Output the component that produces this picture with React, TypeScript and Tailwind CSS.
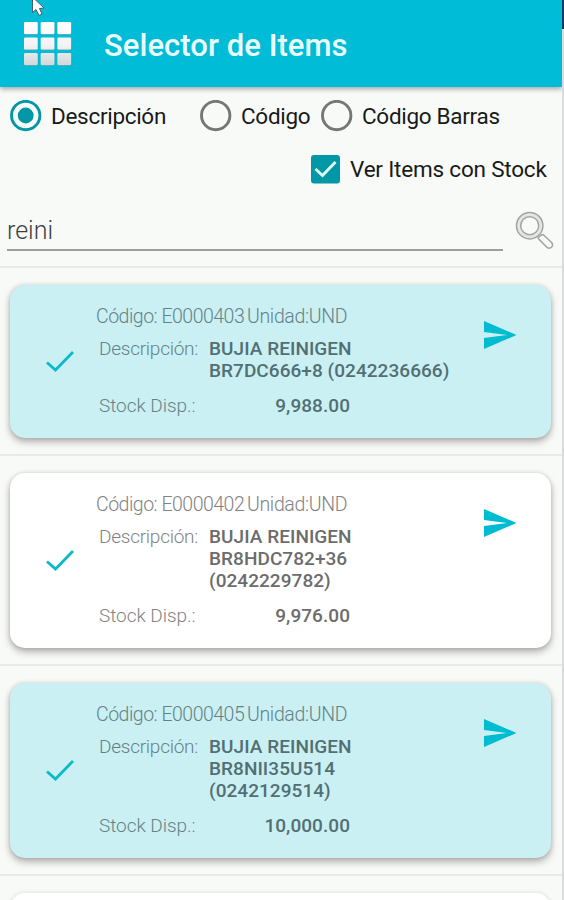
import { useState } from 'react';
import clsx from 'clsx';

type Item = {
    code: string;
    unit: string;
    description: string[];
    stock: string;
    selected: boolean;
};

const items: Item[] = [
    { code: 'E0000403', unit: 'UND', description: ['BUJIA REINIGEN', 'BR7DC666+8 (0242236666)'], stock: '9,988.00', selected: true },
    { code: 'E0000402', unit: 'UND', description: ['BUJIA REINIGEN', 'BR8HDC782+36', '(0242229782)'], stock: '9,976.00', selected: false },
    { code: 'E0000405', unit: 'UND', description: ['BUJIA REINIGEN', 'BR8NII35U514', '(0242129514)'], stock: '10,000.00', selected: true },
];

function GridIcon() {
    return (
        <svg width="48" height="46" viewBox="0 0 48 46">
            <defs>
                <linearGradient id="tiles" gradientUnits="userSpaceOnUse" x1="0" y1="0" x2="0" y2="44">
                    <stop offset="0" stopColor="#ffffff" />
                    <stop offset="0.5" stopColor="#f4f4f4" />
                    <stop offset="1" stopColor="#d2d6d7" />
                </linearGradient>
            </defs>
            {[0, 16.7, 33.4].map((x) =>
                [0, 15.5, 31].map((y) => (
                    <g key={`${x}-${y}`}>
                        <rect x={x} y={y + 0.6} width="13.7" height="12.2" rx="1.2" fill="#6fa9b1" />
                        <rect x={x} y={y} width="13.7" height="12" rx="1.2" fill="url(#tiles)" />
                    </g>
                ))
            )}
        </svg>
    );
}

function SearchIcon() {
    return (
        <svg width="40" height="40" viewBox="0 0 40 40" fill="none" stroke="#a3a5a4" strokeWidth="1.5" strokeLinejoin="round">
            <path d="M23 27 L25.5 24.5 L28 23.5 L36.4 31.3 Q38.6 34 36.7 36 Q34.6 38.2 31.9 36.3 L24.3 28.6 Z" fill="#f8faf8" />
            <circle cx="14.7" cy="14.7" r="13.2" fill="#e4e6e5" />
            <circle cx="14.7" cy="14.7" r="9" fill="#f8faf8" />
        </svg>
    );
}

function Radio({ label, checked, onSelect, className }: { label: string; checked: boolean; onSelect: () => void; className?: string }) {
    return (
        <button type="button" role="radio" aria-checked={checked} onClick={onSelect} className={clsx('flex items-center whitespace-nowrap', className)}>
            <svg width="32" height="32" viewBox="0 0 32 32" fill="none">
                <circle cx="15.7" cy="15.5" r="14.2" stroke={checked ? '#0097a7' : '#757776'} strokeWidth="2.9" />
                {checked && <circle cx="15.7" cy="15.5" r="7.9" fill="#0097a7" />}
            </svg>
            <span className="ml-[9px] text-[22.5px] leading-8 tracking-[-0.3px] text-[#181a19]">{label}</span>
        </button>
    );
}

function ItemCard({ item }: { item: Item }) {
    return (
        <li className="border-t-2 border-[#e8eae8] pt-[17px] pr-[11px] pb-4 pl-[10px]">
            <article
                className={clsx(
                    'flex rounded-[15px] pt-[21px] pb-[21px] shadow-[0_4px_7px_rgba(60,50,50,0.36),0_0_4px_rgba(60,50,50,0.16)]',
                    item.selected ? 'bg-[#caf0f4] text-[#526f73]' : 'bg-white text-[#6c6c6c]'
                )}
            >
                <div className="flex w-[86px] shrink-0 items-center pb-[2px] pl-[35px]">
                    <svg width="30" height="24" viewBox="0 0 30 24" fill="none" stroke="#0bb9cb" strokeWidth="2.8">
                        <path d="M2 13.5 L10.5 21 L28 3" />
                    </svg>
                </div>
                <div className="w-[380px] shrink-0">
                    <div className="flex text-[19.5px] leading-[22px] font-light opacity-85">
                        <span className="w-[151px] tracking-[-0.5px] whitespace-nowrap">Código: {item.code}</span>
                        <span className="tracking-[-0.35px] whitespace-nowrap">Unidad:{item.unit}</span>
                    </div>
                    <div className="mt-[10px] flex pl-[3px] text-[19px] leading-[22px]">
                        <span className="w-[110px] shrink-0 font-light tracking-[-0.25px] opacity-85">Descripción:</span>
                        <div className="font-medium tracking-[0.05px] whitespace-nowrap">
                            {item.description.map((line) => (
                                <p key={line}>{line}</p>
                            ))}
                        </div>
                    </div>
                    <div className="mt-[13px] flex w-[254px] justify-between pl-[3px] text-[19px] leading-[22px]">
                        <span className="font-light tracking-[-0.05px] opacity-85">Stock Disp.:</span>
                        <span className="font-medium tracking-[0.05px]">{item.stock}</span>
                    </div>
                </div>
                <div className="pt-[15px] pl-[8px]">
                    <svg width="33" height="28" viewBox="0 0 33 28" fill="#00bcd0">
                        <path d="M0 0 L32.5 14 L0 28 V17 L23 14 L0 11 Z" />
                    </svg>
                </div>
            </article>
        </li>
    );
}

export default function App() {
    const [mode, setMode] = useState('Descripción');
    const [onlyStock, setOnlyStock] = useState(true);
    const [query, setQuery] = useState('reini');

    return (
        <div className="relative flex h-[900px] w-[564px] overflow-hidden bg-[#f8faf8] font-['Roboto',sans-serif]">
            <main className="w-[562px] shrink-0">
                <header className="flex h-[87px] items-center bg-[#00bcd7] pl-6 shadow-[0_2px_5px_rgba(0,0,0,0.35)]">
                    <div className="pt-[3px]">
                        <GridIcon />
                    </div>
                    <h1 className="ml-[32px] pt-[4px] text-[31px] leading-9 font-medium tracking-[0.05px] whitespace-nowrap text-[#ecfdff]">Selector de Items</h1>
                </header>

                <div className="flex h-[58px] pt-[13px] pl-[10px]" role="radiogroup">
                    <Radio label="Descripción" checked={mode === 'Descripción'} onSelect={() => setMode('Descripción')} className="h-8 w-[190px]" />
                    <Radio label="Código" checked={mode === 'Código'} onSelect={() => setMode('Código')} className="h-8 w-[121px]" />
                    <Radio label="Código Barras" checked={mode === 'Código Barras'} onSelect={() => setMode('Código Barras')} className="h-8" />
                </div>

                <button type="button" onClick={() => setOnlyStock(!onlyStock)} className="flex h-12 items-center pl-[311px]">
                    <svg width="29" height="29" viewBox="0 0 29 29" fill="none">
                        <rect width="29" height="28.5" rx="3" fill={onlyStock ? '#0097a7' : '#757776'} />
                        {onlyStock && <path d="M4.5 14 L11.5 20.5 L24.5 7" stroke="#e6fbfd" strokeWidth="2.8" />}
                    </svg>
                    <span className="ml-[10px] pt-[2px] text-[22.5px] tracking-[-0.2px] whitespace-nowrap text-[#181a19]">Ver Items con Stock</span>
                </button>

                <div className="flex h-[73px] pt-[18px] pl-[7px]">
                    <input
                        value={query}
                        onChange={(e) => setQuery(e.target.value)}
                        className="h-[40px] w-[496px] border-b-2 border-[#9c9f9d] text-[25px] leading-9 font-light text-[#3c3e3d] outline-none"
                    />
                    <div className="ml-[12px]">
                        <SearchIcon />
                    </div>
                </div>

                <ul>
                    {items.map((item) => (
                        <ItemCard key={item.code} item={item} />
                    ))}
                    <li className="border-t-2 border-[#e8eae8] pt-[17px] pr-[11px] pl-[10px]">
                        <div className="h-40 rounded-[15px] bg-white shadow-[0_0_4px_rgba(60,50,50,0.16)]" />
                    </li>
                </ul>
            </main>

            <div className="flex w-[2px] flex-col">
                <div className="h-[29px] bg-[#123a5c]" />
                <div className="flex-1 bg-[#d9dcda]" />
            </div>

            {/* mouse pointer */}
            <svg className="absolute top-0 left-[31px]" width="15" height="17" viewBox="0 0 15 17">
                <path d="M1.5 -3 V12.5 L5 9.5 L8 15.5 L11 14 L8.5 8.5 L13 8 Z" fill="#ffffff" stroke="#44606a" strokeWidth="1" />
            </svg>
        </div>
    );
}
